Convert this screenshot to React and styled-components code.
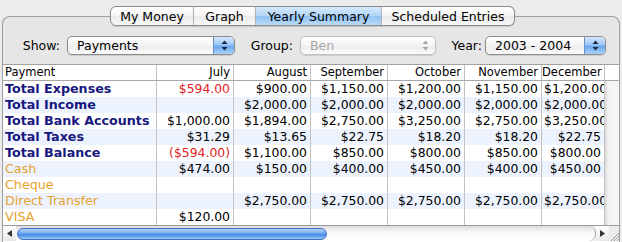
import React from 'react';
import styled, { createGlobalStyle } from 'styled-components';

const GlobalStyle = createGlobalStyle`
	body {
		margin: 0;
		background: #ececec;
		font-family: "DejaVu Sans", Verdana, sans-serif;
	}
`;

const months = ['July', 'August', 'September', 'October', 'November', 'December'];

const rows = [
	{ label: 'Total Expenses', kind: 'total', vals: ['!$594.00', '$900.00', '$1,150.00', '$1,200.00', '$1,150.00', '$1,200.00'] },
	{ label: 'Total Income', kind: 'total', vals: ['', '$2,000.00', '$2,000.00', '$2,000.00', '$2,000.00', '$2,000.00'] },
	{ label: 'Total Bank Accounts', kind: 'total', vals: ['$1,000.00', '$1,894.00', '$2,750.00', '$3,250.00', '$2,750.00', '$3,250.00'] },
	{ label: 'Total Taxes', kind: 'total', vals: ['$31.29', '$13.65', '$22.75', '$18.20', '$18.20', '$22.75'] },
	{ label: 'Total Balance', kind: 'total', vals: ['!($594.00)', '$1,100.00', '$850.00', '$800.00', '$850.00', '$800.00'] },
	{ label: 'Cash', kind: 'account', vals: ['$474.00', '$150.00', '$400.00', '$450.00', '$400.00', '$450.00'] },
	{ label: 'Cheque', kind: 'account', vals: ['', '', '', '', '', ''] },
	{ label: 'Direct Transfer', kind: 'account', vals: ['', '$2,750.00', '$2,750.00', '$2,750.00', '$2,750.00', '$2,750.00'] },
	{ label: 'VISA', kind: 'account', vals: ['$120.00', '', '', '', '', ''] }
];

const UpDown = ({ color }) => (
	<svg width="7" height="11" viewBox="0 0 7 11">
		<path d="M3.5 0.5 L6.5 4 L0.5 4 Z" fill={color} />
		<path d="M3.5 10.5 L6.5 7 L0.5 7 Z" fill={color} />
	</svg>
);

class App extends React.Component {
	render() {
		return (
			<Window>
				<GlobalStyle />
				<TabRow>
					<Tab w={84} first>My Money</Tab>
					<Tab w={63}>Graph</Tab>
					<Tab w={127} selected>Yearly Summary</Tab>
					<Tab w={134} last>Scheduled Entries</Tab>
				</TabRow>
				<Panel>
					<Controls>
						<Label w={64} pad={7}>Show:</Label>
						<Popup w={168}>
							<PopupText>Payments</PopupText>
							<ArrowCap><UpDown color="#1a2a40" /></ArrowCap>
						</Popup>
						<Label w={65} pad={7}>Group:</Label>
						<Popup w={136} disabled>
							<PopupText disabled>Ben</PopupText>
							<ArrowCap disabled><UpDown color="#a8a8a8" /></ArrowCap>
						</Popup>
						<Label w={49} pad={3}>Year:</Label>
						<Popup w={121}>
							<PopupText>2003 - 2004</PopupText>
							<ArrowCap><UpDown color="#1a2a40" /></ArrowCap>
						</Popup>
					</Controls>
					<TableBox>
						<HeaderRow>
							<HeadCell left>Payment</HeadCell>
							{months.map(m => <HeadCell key={m}>{m}</HeadCell>)}
							<HeadCell corner />
						</HeaderRow>
						{rows.map((r, i) => (
							<Row key={r.label} striped={i % 2 === 1}>
								<NameCell kind={r.kind}>{r.label}</NameCell>
								{r.vals.map((v, j) => (
									<ValueCell key={j} red={v.startsWith('!')}>
										<span>{v.replace('!', '')}</span>
									</ValueCell>
								))}
								<Filler />
							</Row>
						))}
						<ScrollBar>
							<ScrollArrow>
								<svg width="5" height="7" viewBox="0 0 5 7"><path d="M0 3.5 L5 0 L5 7 Z" fill="#333" /></svg>
							</ScrollArrow>
							<Track>
								<Thumb />
							</Track>
							<ScrollArrow>
								<svg width="5" height="7" viewBox="0 0 5 7"><path d="M5 3.5 L0 0 L0 7 Z" fill="#333" /></svg>
							</ScrollArrow>
							<GrowBox>
								<svg width="10" height="10" viewBox="0 0 10 10">
									<path d="M2 10 L10 2 M5 10 L10 5 M8 10 L10 8" stroke="#9a9a9a" strokeWidth="1" />
								</svg>
							</GrowBox>
						</ScrollBar>
					</TableBox>
				</Panel>
			</Window>
		);
	}
}

const Window = styled.div`
	width: 622px;
	height: 242px;
	box-sizing: border-box;
	padding: 6px 2px 0 2px;
	overflow: hidden;
	background: #ececec;
`;

const TabRow = styled.div`
	display: flex;
	padding-left: 108px;
	height: 20px;
	position: relative;
	z-index: 1;
	margin-bottom: -10px;
`;

const Tab = styled.div`
	width: ${p => p.w}px;
	height: 20px;
	box-sizing: border-box;
	display: flex;
	align-items: center;
	justify-content: center;
	font-family: "Lucida Grande", "DejaVu Sans", sans-serif;
	font-size: 12.5px;
	color: #000;
	border: 1px solid #8a8a8a;
	border-left: ${p => (p.first ? '1px solid #8a8a8a' : '1px solid #b4b4b4')};
	margin-left: ${p => (p.first ? 0 : -1)}px;
	border-radius: ${p => (p.first ? '6px 0 0 6px' : p.last ? '0 6px 6px 0' : '0')};
	background: ${p => (p.selected
		? 'linear-gradient(#d6e9fc 0%, #b3d5f7 48%, #93c3f3 52%, #b7daf9 100%)'
		: 'linear-gradient(#ffffff 0%, #f5f5f5 48%, #ebebeb 52%, #f7f7f7 100%)')};
	box-shadow: 0 1px 1px rgba(0, 0, 0, 0.12);
`;

const Panel = styled.div`
	height: 226px;
	box-sizing: border-box;
	border: 1px solid #9e9e9e;
	border-bottom: none;
	border-radius: 8px 8px 0 0;
	background: #e6e6e6;
	display: flex;
	flex-direction: column;
`;

const Controls = styled.div`
	display: flex;
	align-items: center;
	height: 20px;
	margin-top: 18px;
	margin-bottom: 9px;
`;

const Label = styled.div`
	width: ${p => p.w}px;
	padding-right: ${p => p.pad}px;
	box-sizing: border-box;
	text-align: right;
	font-family: "Lucida Grande", "DejaVu Sans", sans-serif;
	font-size: 12.5px;
	color: #000;
`;

const Popup = styled.div`
	width: ${p => p.w}px;
	height: 19px;
	box-sizing: border-box;
	display: flex;
	align-items: stretch;
	border: 1px solid ${p => (p.disabled ? '#c2c2c2' : '#8c8c8c')};
	border-radius: 5px;
	background: linear-gradient(#ffffff, #f4f4f4 50%, #ececec 51%, #fafafa);
	box-shadow: 0 1px 1px rgba(0, 0, 0, 0.12);
	overflow: hidden;
`;

const PopupText = styled.div`
	flex: 1;
	padding-left: 9px;
	display: flex;
	align-items: center;
	font-family: "Lucida Grande", "DejaVu Sans", sans-serif;
	font-size: 12.5px;
	color: ${p => (p.disabled ? '#a6a6a6' : '#000')};
`;

const ArrowCap = styled.div`
	width: 20px;
	display: flex;
	align-items: center;
	justify-content: center;
	border-left: 1px solid ${p => (p.disabled ? 'transparent' : '#6e8fc0')};
	background: ${p => (p.disabled
		? 'transparent'
		: 'linear-gradient(#d2e6fb 0%, #9ec8f4 45%, #6aa7ee 55%, #a9d2f8 100%)')};
`;

const TableBox = styled.div`
	flex: 1;
	border-top: 1px solid #a2a2a2;
	background: #fff;
	display: flex;
	flex-direction: column;
`;

const columns = '154px repeat(5, 77px) 63px 1fr';

const HeaderRow = styled.div`
	display: grid;
	grid-template-columns: ${columns};
	height: 16px;
	box-sizing: border-box;
	border-bottom: 1px solid #a8a8a8;
	background: #fff;
`;

const HeadCell = styled.div`
	box-sizing: border-box;
	border-right: ${p => (p.corner ? 'none' : '1px solid #c2c2c2')};
	padding: ${p => (p.left ? '0 0 0 2px' : '0 3px 0 0')};
	text-align: ${p => (p.left ? 'left' : 'right')};
	font-size: 11.5px;
	line-height: 15px;
	color: #000;
	white-space: nowrap;
	overflow: hidden;
`;

const Row = styled.div`
	display: grid;
	grid-template-columns: ${columns};
	height: 16px;
	background: ${p => (p.striped ? '#edf3fe' : '#fff')};
`;

const NameCell = styled.div`
	box-sizing: border-box;
	border-right: 1px solid #c2c2c2;
	padding-left: 2px;
	font-size: 12.7px;
	line-height: 16px;
	font-weight: ${p => (p.kind === 'total' ? 'bold' : 'normal')};
	color: ${p => (p.kind === 'total' ? '#17177e' : '#e6a22c')};
	white-space: nowrap;
	overflow: hidden;
`;

const ValueCell = styled.div`
	box-sizing: border-box;
	border-right: 1px solid #c2c2c2;
	padding: 0 3px 0 2px;
	display: flex;
	justify-content: safe flex-end;
	font-size: 12.4px;
	line-height: 16px;
	color: ${p => (p.red ? '#e2231f' : '#000')};
	white-space: nowrap;
	overflow: hidden;
	span {
		flex: none;
	}
`;

const Filler = styled.div`
	background: linear-gradient(to right, #d8d8d8, #f2f2f2 3px, #f6f6f6);
`;

const ScrollBar = styled.div`
	height: 15px;
	display: flex;
	align-items: stretch;
	border-top: 1px solid #9a9a9a;
	background: #f2f2f2;
`;

const ScrollArrow = styled.div`
	width: 13px;
	display: flex;
	align-items: center;
	justify-content: center;
	background: linear-gradient(#fdfdfd, #e9e9e9);
`;

const Track = styled.div`
	flex: 1;
	display: flex;
	align-items: center;
	padding-left: 1px;
	border-radius: 0 7px 7px 0;
	border-right: 1px solid #a6a6a6;
	background: linear-gradient(#dcdcdc, #f8f8f8 40%, #ffffff);
`;

const Thumb = styled.div`
	width: 310px;
	height: 12px;
	box-sizing: border-box;
	border: 1px solid #3d6fc6;
	border-radius: 7px;
	background: linear-gradient(#b7d6f8 0%, #7fb3f0 35%, #4d8fe4 55%, #6aa7ee 80%, #a9d0f8 100%);
`;

const GrowBox = styled.div`
	width: 10px;
	display: flex;
	align-items: flex-end;
	justify-content: flex-end;
	background: #ececec;
`;

export default App;
